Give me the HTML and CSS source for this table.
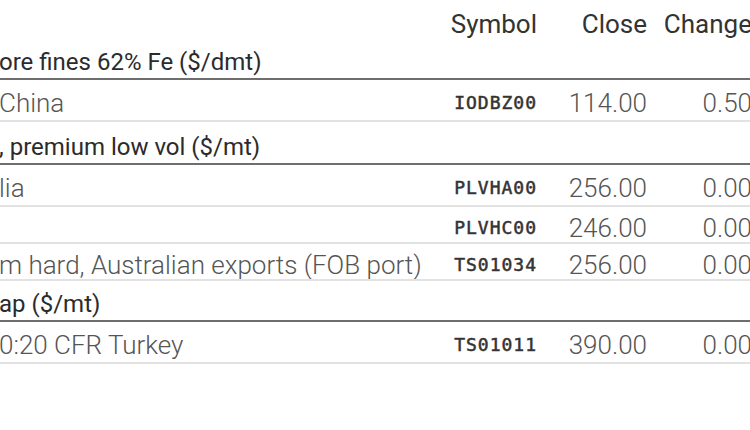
FILE: index.html
```html
<!DOCTYPE html>
<html>
<head>
<meta charset="utf-8">
<link rel="stylesheet" href="styles.css">
</head>
<body>
<table class="prices">
  <colgroup>
    <col class="c-name"><col class="c-sym"><col class="c-close"><col class="c-chg">
  </colgroup>
  <thead>
    <tr class="head">
      <th class="name"></th>
      <th class="num">Symbol</th>
      <th class="num">Close</th>
      <th class="num">Change</th>
    </tr>
  </thead>
  <tbody>
    <tr class="group g1"><td colspan="4">ore fines 62% Fe ($/dmt)</td></tr>
    <tr class="row tall"><td class="name">China</td><td class="sym">IODBZ00</td><td class="num">114.00</td><td class="num">0.50</td></tr>
    <tr class="group"><td colspan="4">, premium low vol ($/mt)</td></tr>
    <tr class="row tall"><td class="name">lia</td><td class="sym">PLVHA00</td><td class="num">256.00</td><td class="num">0.00</td></tr>
    <tr class="row"><td class="name"></td><td class="sym">PLVHC00</td><td class="num">246.00</td><td class="num">0.00</td></tr>
    <tr class="row"><td class="name">m hard, Australian exports (FOB port)</td><td class="sym">TS01034</td><td class="num">256.00</td><td class="num">0.00</td></tr>
    <tr class="group g3"><td colspan="4">ap ($/mt)</td></tr>
    <tr class="row tall"><td class="name">0:20 CFR Turkey</td><td class="sym">TS01011</td><td class="num">390.00</td><td class="num">0.00</td></tr>
  </tbody>
</table>
</body>
</html>
```
FILE: styles.css
```css
html, body {
  margin: 0;
  padding: 0;
  background: #ffffff;
  overflow: hidden;
}
body {
  font-family: Roboto, "Liberation Sans", sans-serif;
  color: #333;
}
.prices {
  border-collapse: collapse;
  width: 753px;
  table-layout: fixed;
  margin-left: -1px;
}
.c-name { width: 441px; }
.c-sym { width: 97px; }
.c-close { width: 110px; }
.c-chg { width: 105px; }

.prices th, .prices td {
  padding: 0;
  white-space: nowrap;
  overflow: hidden;
}
.head th {
  height: 48px;
  font-size: 26px;
  font-weight: 400;
  color: #333;
  vertical-align: middle;
  text-align: right;
  padding-bottom: 2px;
}
.prices .group td {
  height: 37px;
  font-size: 24px;
  line-height: 24px;
  font-weight: 400;
  color: #2b2b2b;
  vertical-align: bottom;
  padding-bottom: 4px;
  border-bottom: 2px solid #6e6e6e;
  overflow: visible;
}
.prices .g1 td { height: 21px; }
.prices .g3 td { height: 35px; }
.row td {
  height: 29px;
  line-height: 28px;
  border-bottom: 2px solid #e2e2e2;
  font-size: 26px;
  font-weight: 300;
  color: #555;
  vertical-align: middle;
  padding-top: 6px;
}
.row.tall td { height: 34px; }
.row .name {
  text-align: left;
}
.row .sym {
  text-align: right;
  font-family: "DejaVu Sans Mono", monospace;
  font-size: 18px;
  font-weight: 400;
  -webkit-text-stroke: 0.5px #333;
  color: #333;
  letter-spacing: 1px;
}
.row .num {
  text-align: right;
}
```
